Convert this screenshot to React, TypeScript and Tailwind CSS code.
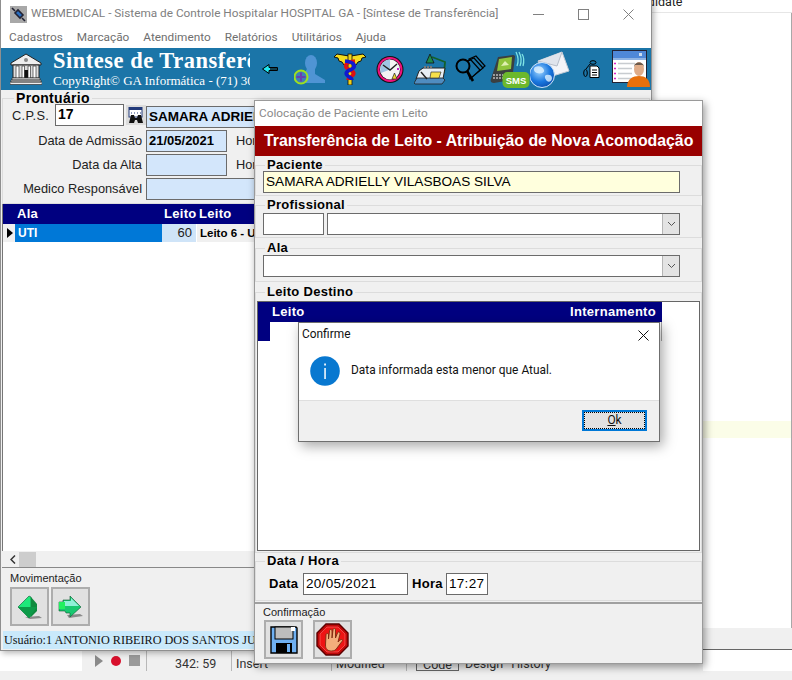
import type { ReactNode } from "react";

const ui = "font-['Roboto',sans-serif]";
const arial = "font-['Liberation_Sans',Arial,sans-serif]";

function Group({ title, className, children }: { title: string; className?: string; children: ReactNode }) {
  return (
    <fieldset className={`border border-[#dcdcdc] ${className ?? ""}`}>
      <legend className="ml-[9px] px-[2px] text-[13px] leading-[16px] font-bold tracking-[0.3px] text-black">{title}</legend>
      {children}
    </fieldset>
  );
}

function Field({ className, children }: { className?: string; children?: ReactNode }) {
  return (
    <div className={`h-[22px] shrink-0 overflow-hidden border border-[#6b6b6b] pl-[2px] leading-[19px] text-black whitespace-nowrap ${className ?? ""}`}>
      {children}
    </div>
  );
}

function Combo({ className }: { className?: string }) {
  return (
    <div className={`flex h-[22px] shrink-0 justify-end border border-[#6b6b6b] bg-white ${className ?? ""}`}>
      <div className="flex w-[17px] items-center justify-center border-l border-[#b5b5b5] bg-[#e3e3e3]">
        <svg width="9" height="6" viewBox="0 0 9 6"><path d="M1 1l3.5 3.5L8 1" fill="none" stroke="#555" strokeWidth="1" /></svg>
      </div>
    </div>
  );
}

function ToolButton({ className, children }: { className?: string; children: ReactNode }) {
  return (
    <div className={`flex h-[39px] w-[39px] items-center justify-center border-2 border-[#adadad] bg-[#e1e1e1] ${className ?? ""}`}>
      {children}
    </div>
  );
}

function BuildingIcon() {
  return (
    <svg width="32" height="32" viewBox="0 0 32 32" className="shrink-0">
      <path d="M16 1L1 10v2h30v-2z" fill="#eee" stroke="#222" />
      <circle cx="16" cy="7" r="2" fill="#888" />
      <rect x="3" y="12" width="26" height="13" fill="#ddd" stroke="#222" />
      <path d="M6 13h3v12H6zM12 13h2.500v12H12zM18 13h2.500v12H18zM23 13h3v12h-3z" fill="#fff" stroke="#333" strokeWidth=".7" />
      <rect x="14.500" y="17" width="3.500" height="8" fill="#111" />
      <path d="M2 25h28v2H2zM1 27h30v2H1zM0 29h32v2.500H0z" fill="#eee" stroke="#333" strokeWidth=".7" />
    </svg>
  );
}

function BackArrow() {
  return (
    <svg width="16" height="10" viewBox="0 0 16 10" className="shrink-0">
      <path d="M.5 5L7 .5v3h8.500v3H7v3z" fill="#22e8f0" stroke="#000" />
      <path d="M8 4h7v2H8z" fill="#104050" />
    </svg>
  );
}

function PersonAdd() {
  return (
    <svg width="31" height="30" viewBox="0 0 31 30" className="shrink-0">
      <ellipse cx="17" cy="8" rx="6" ry="8" fill="#4f94d4" />
      <path d="M13 14h8v5l10 6v3H10v-9z" fill="#4f94d4" />
      <circle cx="7" cy="22" r="6.500" fill="#3f7fb8" stroke="#9ee01e" strokeWidth="2" />
      <path d="M7 17.500v9M2.500 22h9" stroke="#6a3fb0" strokeWidth="2" />
    </svg>
  );
}

function Caduceus() {
  return (
    <svg width="32" height="32" viewBox="0 0 32 32" className="shrink-0">
      <path d="M15 3L3 1 0 4l4 1 1 3 3 1 2 3 5-2zM17 3L29 1l3 3-4 1-1 3-3 1-2 3-5-2z" fill="#f4dc1e" stroke="#111" strokeWidth="1" />
      <rect x="14" y="1" width="4" height="31" fill="#f0d018" stroke="#111" strokeWidth=".8" />
      <path d="M21 8c-9 1-12 5-7 8 5 2 8 4 4 7-2 2-4 2-4 4" fill="none" stroke="#e01010" strokeWidth="3.600" />
      <path d="M11 8c9 1 12 5 7 8-5 2-8 4-4 7 2 2 4 2 4 4" fill="none" stroke="#1018d0" strokeWidth="3.600" />
    </svg>
  );
}

function ClockIcon() {
  return (
    <svg width="28" height="29" viewBox="0 0 28 29" className="shrink-0">
      <circle cx="14" cy="14.500" r="13.500" fill="#111" />
      <circle cx="14" cy="14.500" r="11.500" fill="none" stroke="#f0107c" strokeWidth="2" />
      <circle cx="14" cy="14.500" r="10" fill="#f4f4f4" />
      <path d="M14 4.500A10 10 0 0 0 5 18l9-3.500z" fill="#9fc4e4" />
      <path d="M7 10l7 5 7-6" fill="none" stroke="#222" strokeWidth="1.400" />
      <path d="M16 24l2.500-6 2.500 6z" fill="#f0d830" stroke="#222" strokeWidth=".7" />
      <rect x="21" y="13" width="2" height="2" fill="#c020c0" />
    </svg>
  );
}

function DeskIcon() {
  return (
    <svg width="33" height="32" viewBox="0 0 33 32" className="shrink-0">
      <path d="M12 10l4-9 4 9z" fill="#1d8a4c" stroke="#111" strokeWidth=".8" />
      <path d="M18 4l13 5-1 11" fill="none" stroke="#12602a" strokeWidth="1.800" />
      <path d="M5 18l4-3h22l-2 11H2z" fill="#e8eef4" stroke="#222" />
      <path d="M0 30l3-5h26l2 2-3 4H1z" fill="#4f8cc0" stroke="#222" strokeWidth=".8" />
      <path d="M17 19h10l-2 6h-9z" fill="#f6e04a" stroke="#333" strokeWidth=".7" />
      <path d="M7 19l6 7" stroke="#222" strokeWidth="1.400" />
      <path d="M10 14h9" stroke="#777" strokeWidth="2" strokeDasharray="2 1" />
    </svg>
  );
}

function SearchPages() {
  return (
    <svg width="31" height="28" viewBox="0 0 31 28" className="shrink-0">
      <path d="M14 4l7-3 9 10-11 9z" fill="none" stroke="#000" strokeWidth="1.200" />
      <path d="M12 6l7-3 9 10-11 9z" fill="#1b75a8" stroke="#000" strokeWidth="1.200" />
      <path d="M10 7l6-2 9 10-10 9z" fill="#1b75a8" stroke="#000" strokeWidth="1.200" />
      <circle cx="8" cy="11" r="6.500" fill="#1b75a8" stroke="#000" strokeWidth="2" />
      <path d="M12 16l6 10" stroke="#000" strokeWidth="2.600" />
    </svg>
  );
}

function PhoneSms() {
  return (
    <svg width="40" height="37" viewBox="0 0 40 37" className="shrink-0">
      <path d="M26 1c2 4 3 9 1 14M29 1c2 4 3 9 1 14M32 3c2 3 2 8 1 12" fill="none" stroke="#7fe4e4" strokeWidth="1.300" />
      <path d="M8 6l15-2c2 0 2 1 2 2l-3 23-18 3c-3 0-4-2-3-4z" fill="#3b3f40" />
      <path d="M9 8l13-2-1 12-14 2z" fill="#8fc43c" />
      <path d="M11 15l4-5 4 4z" fill="#dff0b0" />
      <path d="M3 24h10M3 27h10" stroke="#bbb" strokeWidth="1.500" strokeDasharray="2 1" />
      <rect x="12.500" y="21" width="27" height="16" rx="5" fill="#6cb82c" />
      <text x="26" y="33" textAnchor="middle" fontFamily="Liberation Sans" fontWeight="700" fontSize="9.500" fill="#fff">SMS</text>
    </svg>
  );
}

function GlobeMail() {
  return (
    <svg width="40" height="37" viewBox="0 0 40 37" className="shrink-0">
      <defs>
        <radialGradient id="globeFill" cx="0.400" cy="0.350" r="0.700">
          <stop offset="0" stopColor="#9fd6ff" />
          <stop offset="0.600" stopColor="#1a78e0" />
          <stop offset="1" stopColor="#0b4fb0" />
        </radialGradient>
      </defs>
      <path d="M8 10L32 1l7 19-23 7z" fill="#f2f4f8" stroke="#c4ccd6" />
      <path d="M8 10l19 5 5-14" fill="#dfe4ec" stroke="#b4bcc8" />
      <circle cx="12" cy="24" r="12.500" fill="url(#globeFill)" stroke="#cfe6fa" />
      <path d="M5 16c4-2 8 0 9 3s-4 4-7 3-4-4-2-6zM16 24c3-1 6 0 6 3s-3 5-5 3-3-5-1-6z" fill="#e0f2ff" opacity=".8" />
    </svg>
  );
}

function SmallDoc() {
  return (
    <svg width="17" height="18" viewBox="0 0 17 18" className="shrink-0">
      <path d="M7 6h7l2 2v9.500H7z" fill="#fff" stroke="#000" />
      <path d="M9 10h5M9 12.500h5M9 15h5" stroke="#000" />
      <ellipse cx="10" cy="2.500" rx="3" ry="1.800" fill="none" stroke="#000" />
      <ellipse cx="2.500" cy="13" rx="1.800" ry="3.500" fill="none" stroke="#000" />
      <path d="M3 9l4-5" stroke="#000" />
    </svg>
  );
}

function UserCard() {
  return (
    <svg width="38" height="38" viewBox="0 0 38 38" className="shrink-0">
      <rect x=".5" y=".5" width="34" height="32" fill="#fff" stroke="#223" />
      <rect x="1" y="1" width="33" height="8" fill="#4f88d8" />
      <rect x="27" y="3" width="3" height="3" fill="#cde" />
      <path d="M1 9h33" stroke="#8fb4e4" strokeWidth="2" />
      <path d="M6 13.500h17M6 18.500h14M6 23.500h14M6 28.500h14" stroke="#c8ccd0" strokeWidth="1.500" />
      <path d="M2 13.500h2M2 18.500h2M2 23.500h2M2 28.500h2" stroke="#e020c8" strokeWidth="1.500" />
      <ellipse cx="27" cy="19" rx="5" ry="7" fill="#e0ac88" />
      <path d="M22 17c0-6 10-6 10 0l-1-2h-8z" fill="#6b5a4c" />
      <path d="M15 37c0-8 6-11 12-11s11 3 11 11z" fill="#e8700c" />
    </svg>
  );
}

function Binoculars() {
  return (
    <svg width="16" height="17" viewBox="0 0 16 17">
      <rect x="1" y="0" width="13" height="10" fill="#fff" stroke="#223a7a" />
      <rect x="1" y="0" width="13" height="3" fill="#223a7a" />
      <path d="M3 6h1M6 6h1M9 6h1M12 6h1" stroke="#223a7a" />
      <path d="M1 16l2-8h3l1 3h2l1-3h3l2 8h-5l-1-3H7l-1 3z" fill="#111" />
    </svg>
  );
}

function GreenLeft() {
  return (
    <svg width="26" height="24" viewBox="0 0 26 24">
      <path d="M8 22l14-1 3 2-12 1z" fill="#8a8a8a" />
      <path d="M1 12L12 1l2 1v19l-2 2z" fill="#1ee87a" stroke="#0a5a30" strokeWidth=".6" />
      <path d="M14 2l6 7v7l-6 6z" fill="#0f8a3e" />
      <path d="M1 12h19l-8 11z" fill="#0c9a48" />
    </svg>
  );
}

function GreenRight() {
  return (
    <svg width="26" height="24" viewBox="0 0 26 24">
      <path d="M9 20l13-1 3 2-14 2z" fill="#8a8a8a" />
      <path d="M5 5h7V1l11 11-11 10v-4H8l-1-2H1V7h4z" fill="#18c870" stroke="#0a5a30" strokeWidth=".6" />
      <path d="M6 6h7V3l8 8H4z" fill="#8ff0d8" />
      <path d="M1 7h6v7H1z" fill="#22f060" />
    </svg>
  );
}

function SaveDisk() {
  return (
    <svg width="28" height="28" viewBox="0 0 28 28">
      <path d="M1 1h25l1 1v25H1z" fill="#6fb0f2" stroke="#000" strokeWidth="1.400" />
      <rect x="5" y="1" width="18" height="12" fill="#bdbdbd" stroke="#000" />
      <rect x="21" y="1" width="4" height="4" fill="#fff" />
      <rect x="6" y="17" width="16" height="10" fill="#000" />
      <rect x="17" y="18" width="3" height="8" fill="#6fb0f2" />
    </svg>
  );
}

function StopHand() {
  return (
    <svg width="33" height="33" viewBox="0 0 33 33">
      <path d="M10 1h13l9 9v13l-9 9H10l-9-9V10z" fill="#c00808" stroke="#5a0000" strokeWidth="1.400" />
      <path d="M11 4h11l7 7v11l-7 7H11l-7-7V11z" fill="#ee1414" stroke="#ff7070" strokeWidth=".6" />
      <path d="M10 12c0-2 2.500-2 2.500 0v4l1-8c0-2 2.500-2 2.500 0v7l1-8c0-2 2.500-2 2.500 0v8l2-5c1-2 2.500-1 2.500 1l-2 8c1-1 2.500-2.500 3.500-2.500 1.500 0 1 1.500 0 2.500l-4.500 6c-1 2-3 3-5.500 3-4 0-6-2-6-6z" fill="#f4ae7c" stroke="#7a2a10" strokeWidth=".9" />
    </svg>
  );
}

function InfoIcon() {
  return (
    <svg width="30" height="30" viewBox="0 0 30 30" className="shrink-0">
      <circle cx="15" cy="15" r="14.800" fill="#0878d0" />
      <rect x="14.300" y="12" width="1.500" height="11" fill="#fff" />
      <rect x="14.200" y="7.500" width="1.700" height="2" fill="#fff" />
    </svg>
  );
}

function MainWindow() {
  const menus = ["Cadastros", "Marcação", "Atendimento", "Relatórios", "Utilitários", "Ajuda"];
  return (
    <div className={`absolute left-0 top-0 flex h-[651px] w-[652px] flex-col overflow-hidden border-x border-b border-[#8f8f8f] bg-[#f0f0f0] shadow-[2px_2px_6px_rgba(0,0,0,0.3)] ${arial}`}>
      <div className={`flex h-[28px] shrink-0 items-center bg-white pl-[9px] text-[11.8px] text-[#808080] ${ui}`}>
        <div className="flex h-[17px] w-[17px] items-center justify-center bg-[#a8a8a8]">
          <svg width="15" height="15" viewBox="0 0 15 15"><path d="M1 1l3 3M4 6l5 5 3-3-5-5zM11 11l3 3" stroke="#223" strokeWidth="1.600" fill="#2a6fc0" /></svg>
        </div>
        <span className="ml-[4px] whitespace-nowrap">WEBMEDICAL - Sistema de Controle Hospitalar HOSPITAL GA - [Síntese de Transferência]</span>
        <div className="ml-auto flex items-center">
          <div className="h-px w-[11px] bg-[#808080]" />
          <div className="ml-[34px] h-[11px] w-[11px] border border-[#808080]" />
          <svg className="ml-[34px] mr-[17px]" width="11" height="11" viewBox="0 0 11 11"><path d="M.5.5l10 10M10.500.5l-10 10" stroke="#808080" /></svg>
        </div>
      </div>
      <div className={`flex h-[20px] shrink-0 items-center gap-[14px] bg-white pl-[8px] text-[11.8px] text-[#6f6f6f] ${ui}`}>
        {menus.map((m) => <span key={m}>{m}</span>)}
      </div>
      <div className="flex h-[42px] shrink-0 items-center bg-[#1b75a8] pl-[1px]">
        <div className="ml-[8px]"><BuildingIcon /></div>
        <div className="-mt-[2px] ml-[11px] w-[197px] shrink-0 overflow-hidden whitespace-nowrap font-['Liberation_Serif',serif] text-white">
          <div className="text-[22.5px] font-bold leading-[24px] tracking-[0.5px]">Sintese de Transferência</div>
          <div className="text-[13px] leading-[15px]">CopyRight© GA Informática - (71) 3015-0000</div>
        </div>
        <div className="ml-[12px]"><BackArrow /></div>
        <div className="ml-[16px] mt-[2px]"><PersonAdd /></div>
        <div className="ml-[9px]"><Caduceus /></div>
        <div className="ml-[10px]"><ClockIcon /></div>
        <div className="ml-[10px]"><DeskIcon /></div>
        <div className="ml-[8px]"><SearchPages /></div>
        <div className="ml-[4px]"><PhoneSms /></div>
        <GlobeMail />
        <div className="ml-[13px]"><SmallDoc /></div>
        <div className="ml-[12px]"><UserCard /></div>
      </div>
      <fieldset className="mx-[1px] h-[114px] shrink-0 border border-[#dcdcdc] text-[12.8px] text-[#222]">
        <legend className="ml-[11px] px-[2px] text-[14px] leading-[16px] font-bold tracking-[0.3px] text-black">Prontuário</legend>
        <div className="-mt-[2px] flex h-[24px]">
          <span className="ml-[9px] w-[43px] pt-[3px] leading-[18px] tracking-[0.3px]">C.P.S.</span>
          <Field className="w-[69px] bg-white text-[14px] font-bold">17</Field>
          <div className="ml-[2px] mt-[1px] flex h-[20px] w-[20px] items-center justify-center bg-[#dcdcdc]"><Binoculars /></div>
          <Field className="mt-[2px] w-[300px] bg-[#d3e6fb] text-[13.5px] font-bold">SAMARA ADRIELLY VILASBOAS SILVA</Field>
        </div>
        <div className="mt-[2px] flex h-[22px] items-center">
          <span className="w-[140px] pr-[1px] text-right">Data de Admissão</span>
          <Field className="ml-[3px] w-[81px] bg-[#d3e6fb] text-[13px] font-bold">21/05/2021</Field>
          <span className="ml-[9px]">Hora</span>
        </div>
        <div className="mt-[2px] flex h-[22px] items-center">
          <span className="w-[140px] pr-[1px] text-right">Data da Alta</span>
          <Field className="ml-[3px] w-[81px] bg-[#d3e6fb]" />
          <span className="ml-[9px]">Hora</span>
        </div>
        <div className="mt-[2px] flex h-[22px] items-center">
          <span className="w-[140px] pr-[1px] text-right">Medico Responsável</span>
          <Field className="ml-[3px] w-[300px] bg-[#d3e6fb]" />
        </div>
      </fieldset>
      <div className="mx-[1px] flex min-h-0 flex-1 flex-col border-l border-[#777] bg-white">
        <div className="flex h-[20px] shrink-0 items-center bg-[#000080] text-[13px] font-bold tracking-[0.3px] text-white">
          <span className="ml-[14px] w-[147px]">Ala</span>
          <span className="w-[35px]">Leito</span>
          <span>Leito</span>
        </div>
        <div className="flex h-[18px] shrink-0 text-[13px] leading-[18px]">
          <div className="flex w-[12px] items-center bg-[#f0f0f0] pl-[4px]">
            <svg width="6" height="10" viewBox="0 0 6 10"><path d="M0 0l6 5-6 5z" fill="#000" /></svg>
          </div>
          <div className="w-[147px] bg-[#0078d7] pl-[3px] text-[12px] font-bold text-white">UTI</div>
          <div className="w-[34px] bg-[#cfe4f8] pr-[4px] text-right text-[#222]">60</div>
          <div className="ml-px w-[120px] bg-[#f0f0f0] pl-[3px] text-[11.5px] font-bold text-black whitespace-nowrap">Leito 6 - UTI</div>
        </div>
      </div>
      <div className="mx-[1px] flex h-[17px] shrink-0 items-center border-b border-[#888] pl-[8px]">
        <svg width="6" height="9" viewBox="0 0 6 9"><path d="M5 .5L1 4.500l4 4" fill="none" stroke="#333" strokeWidth="1.500" /></svg>
        <div className="ml-[3px] h-[15px] w-[17px] bg-[#cdcdcd]" />
      </div>
      <div className="h-[63px] shrink-0 pl-[9px] pt-[3px]">
        <div className="text-[11px] leading-[14px] text-[#222]">Movimentação</div>
        <div className="mt-[2px] flex gap-[2px]">
          <ToolButton><GreenLeft /></ToolButton>
          <ToolButton><GreenRight /></ToolButton>
        </div>
      </div>
      <div className="mx-[2px] mb-[1px] h-[18px] shrink-0 overflow-hidden bg-[#c9e9fb] pl-[1px] font-['Liberation_Serif',serif] text-[12.2px] leading-[18px] whitespace-nowrap text-[#111]">
        Usuário:1 ANTONIO RIBEIRO DOS SANTOS JUNIOR
      </div>
    </div>
  );
}

function TransferDialog() {
  return (
    <div className={`absolute left-[254px] top-[100px] flex h-[564px] w-[449px] flex-col border border-[#9a9a9a] bg-[#f0f0f0] shadow-[2px_3px_8px_rgba(0,0,0,0.4)] ${arial}`}>
      <div className={`flex h-[25px] shrink-0 items-center bg-white pl-[4px] text-[11.8px] text-[#8a8a8a] ${ui}`}>Colocação de Paciente em Leito</div>
      <div className="flex h-[30px] shrink-0 items-center bg-[#990000] pl-[9px] text-[15.85px] font-bold text-white whitespace-nowrap">
        Transferência de Leito - Atribuição de Nova Acomodação
      </div>
      <Group title="Paciente" className="mt-px">
        <Field className="-mt-[2px] mb-[2px] ml-[7px] w-[417px] bg-[#ffffdd] pl-[1px] text-[13.6px]">SAMARA ADRIELLY VILASBOAS SILVA</Field>
      </Group>
      <Group title="Profissional" className="mt-px">
        <div className="mb-[2px] ml-[7px] flex gap-[3px]">
          <Field className="w-[61px] bg-white" />
          <Combo className="w-[353px]" />
        </div>
      </Group>
      <Group title="Ala" className="mt-[2px]">
        <Combo className="-mt-px mb-[4px] ml-[7px] w-[417px]" />
      </Group>
      <Group title="Leito Destino" className="mt-[2px]">
        <div className="mb-px ml-px mt-px h-[250px] w-[443px] border border-[#666] bg-white">
          <div className="flex h-[20px] w-[404px] items-center justify-between bg-[#000080] pl-[14px] pr-[6px] text-[13px] font-bold tracking-[0.3px] text-white">
            <span>Leito</span>
            <span>Internamento</span>
          </div>
          <div className="h-[19px] w-[404px] border-r border-[#a8a8a8]">
            <div className="h-full w-[12px] bg-[#000080]" />
          </div>
        </div>
      </Group>
      <Group title="Data / Hora">
        <div className="mb-[5px] ml-[13px] mt-[4px] flex items-center text-[13px] font-bold tracking-[0.3px] text-black">
          <span className="w-[34px]">Data</span>
          <Field className="w-[105px] bg-white text-[13.5px] font-normal">20/05/2021</Field>
          <span className="ml-[4px] w-[34px]">Hora</span>
          <Field className="w-[42px] bg-white text-[13.5px] font-normal">17:27</Field>
        </div>
      </Group>
      <div className="mt-px flex-1 border-t-2 border-[#a0a0a0] pl-[8px] pt-px">
        <div className="text-[11px] leading-[14px] text-[#222]">Confirmação</div>
        <div className="ml-px mt-px flex gap-[10px]">
          <ToolButton><SaveDisk /></ToolButton>
          <ToolButton><StopHand /></ToolButton>
        </div>
      </div>
    </div>
  );
}

function AlertBox() {
  return (
    <div className={`absolute left-[298px] top-[322px] flex h-[120px] w-[362px] flex-col border border-[#6f6f6f] bg-white text-[11.9px] text-[#111] shadow-[3px_4px_12px_rgba(0,0,0,0.35)] ${ui}`}>
      <div className="flex h-[24px] shrink-0 items-center justify-between pl-[3px] pr-[10px]">
        <span>Confirme</span>
        <svg width="11" height="11" viewBox="0 0 11 11"><path d="M.5.5l10 10M10.500.5l-10 10" stroke="#111" /></svg>
      </div>
      <div className="flex flex-1 items-center pb-[5px] pl-[11px]">
        <InfoIcon />
        <span className="ml-[11px]">Data informada esta menor que Atual.</span>
      </div>
      <div className="flex h-[41px] shrink-0 justify-end border-t border-[#dfdfdf] bg-[#f0f0f0] pr-[12px] pt-[9px]">
        <div className="h-[21px] w-[65px] border-2 border-[#0078d7] bg-[#e1e1e1]">
          <div className="flex h-full items-center justify-center border border-dotted border-black leading-none">
            <span><span className="underline">O</span>k</span>
          </div>
        </div>
      </div>
    </div>
  );
}

function Backdrop() {
  return (
    <div className={`flex h-[680px] flex-col bg-white ${ui}`}>
      <div className="h-[13px] shrink-0 overflow-hidden border-b border-[#e6e6e6] pl-[626px] text-[12.5px] leading-[4px] text-[#222]">
        Candidate
      </div>
      <div className="min-h-0 flex-1 border-r border-[#a8a8a8]">
        <div className="mt-[408px] h-[17px] bg-[#fbfde8]" />
      </div>
      <div className="h-[22px] shrink-0 border-b border-[#666] bg-[#f0f0f0]" />
      <div className="flex h-[21px] shrink-0 text-[12.5px] text-[#333]">
        <div className="w-[82px] bg-white" />
        <div className="flex w-[621px] items-center bg-[#f0f0f0]">
          <svg className="ml-[13px]" width="8" height="12" viewBox="0 0 8 12"><path d="M0 0l8 6-8 6z" fill="#8a8a8a" /></svg>
          <div className="ml-[8px] h-[10px] w-[10px] rounded-full bg-[#d8102c]" />
          <div className="ml-[8px] h-[11px] w-[11px] bg-[#9a9a9a]" />
          <div className="ml-[6px] h-full border-l border-[#b8b8b8]" />
          <span className="ml-[28px] w-[56px] pt-[8px]">342: 59</span>
          <div className="h-full border-l border-[#b8b8b8]" />
          <span className="ml-[4px] w-[95px] pt-[8px]">Insert</span>
          <div className="h-full border-l border-[#b8b8b8]" />
          <span className="ml-[4px] w-[70px] pt-[8px]">Modified</span>
          <div className="h-full border-l border-[#b8b8b8]" />
          <span className="ml-[9px] mt-[8px] h-[13px] border border-[#666] px-[6px] leading-[12px]">Code</span>
          <span className="ml-[6px] pt-[8px]">Design</span>
          <span className="ml-[8px] pt-[8px]">History</span>
        </div>
      </div>
      <div className="h-[9px] shrink-0 bg-[#f0f0f0]" />
    </div>
  );
}

export default function App() {
  return (
    <div className="relative h-[680px] w-[792px] overflow-hidden bg-white">
      <Backdrop />
      <MainWindow />
      <TransferDialog />
      <AlertBox />
    </div>
  );
}
